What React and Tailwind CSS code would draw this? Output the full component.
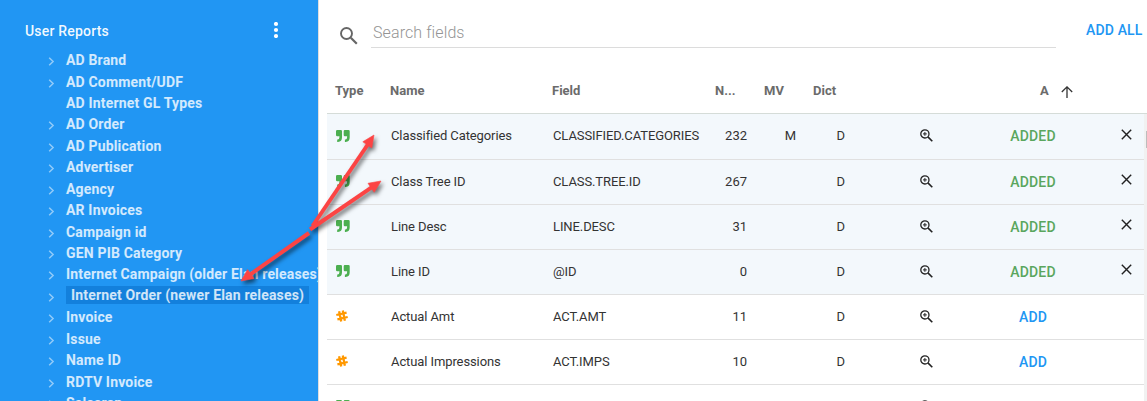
const reports = [
  'AD Brand',
  'AD Comment/UDF',
  'AD Internet GL Types',
  'AD Order',
  'AD Publication',
  'Advertiser',
  'Agency',
  'AR Invoices',
  'Campaign id',
  'GEN PIB Category',
  'Internet Campaign (older Elan releases)',
  'Internet Order (newer Elan releases)',
  'Invoice',
  'Issue',
  'Name ID',
  'RDTV Invoice',
  'Salesrep',
];

const fields = [
  { type: 'text', name: 'Classified Categories', field: 'CLASSIFIED.CATEGORIES', num: '232', mv: 'M', added: true },
  { type: 'text', name: 'Class Tree ID', field: 'CLASS.TREE.ID', num: '267', added: true },
  { type: 'text', name: 'Line Desc', field: 'LINE.DESC', num: '31', added: true },
  { type: 'text', name: 'Line ID', field: '@ID', num: '0', added: true },
  { type: 'number', name: 'Actual Amt', field: 'ACT.AMT', num: '11' },
  { type: 'number', name: 'Actual Impressions', field: 'ACT.IMPS', num: '10' },
];

const columns = 'grid grid-cols-[55px_162px_163px_49px_49px_49px_144px_70px_76px]';

function QuoteIcon() {
  return (
    <svg className="block h-3 w-[14px]" viewBox="0 0 14 12" fill="#4caf50">
      <path d="M1.2 0h3.6Q6 0 6 1.2V7.2Q6 11.6 2 12H1.2V9.6H1.7Q3.4 9.3 3.4 7.2V6.2H1.2Q0 6.2 0 5V1.2Q0 0 1.2 0Z" />
      <path d="M8.9 0h3.6Q13.7 0 13.7 1.2V7.2Q13.7 11.6 9.7 12H8.9V9.6H9.4Q11.1 9.3 11.1 7.2V6.2H8.9Q7.7 6.2 7.7 5V1.2Q7.7 0 8.9 0Z" />
    </svg>
  );
}

function HashIcon() {
  return (
    <svg className="block h-3 w-3" viewBox="0 0 12 12" fill="none" stroke="#ff9800" strokeWidth="2.3">
      <path d="M3.1 1.3 5.2 11.6M6.8.4 8.9 10.7M.3 5 10.6 2.6M1.4 9.4 11.7 7" />
    </svg>
  );
}

function ZoomInIcon() {
  return (
    <svg className="block h-[13px] w-[13px]" viewBox="0 0 13 13" fill="none" stroke="#212121">
      <circle cx="4.9" cy="4.9" r="4.1" strokeWidth="1.3" />
      <path d="M4.9 3v3.8M3 4.9h3.8" strokeWidth="1" />
      <path d="m7.9 7.9 4.4 4.4" strokeWidth="1.6" />
    </svg>
  );
}

function Sidebar() {
  return (
    <aside className="h-full w-[319px] shrink-0 overflow-hidden border-r border-[#dedede] bg-[#2196f3] text-sm font-bold text-white/80">
      <div className="flex h-[49.4px] items-start justify-between pt-[21px] pr-[39px] pl-[25px]">
        <span className="text-sm leading-5 font-medium tracking-[0.2px] text-white/95">User Reports</span>
        <svg className="mt-[1px] h-4 w-[6px]" viewBox="0 0 6 16" fill="#fff">
          <circle cx="3" cy="2" r="2.1" />
          <circle cx="3" cy="8" r="2.1" />
          <circle cx="3" cy="14" r="2.1" />
        </svg>
      </div>
      <ul className="tracking-[0.17px]">
        {reports.map((label, i) => (
          <li key={label} className="flex h-[21.45px] items-center whitespace-nowrap pl-12">
            <span className="flex w-[18px] shrink-0 pt-[3px]">
              {i !== 2 && (
                <svg className="h-[9px] w-[7px]" viewBox="0 0 7 9" fill="none" stroke="#fff" strokeOpacity=".5" strokeWidth="1.5">
                  <path d="m1.2.7 3.9 3.8-3.9 3.8" />
                </svg>
              )}
            </span>
            <span className={i === 11 ? 'mb-px h-[18px] bg-[#1380dc] px-[5px] leading-[18px]' : 'leading-[18px]'}>{label}</span>
          </li>
        ))}
      </ul>
    </aside>
  );
}

function FieldRow({ row, first }) {
  return (
    <div
      className={`${columns} shrink-0 items-center border-b border-[#e0e0e0] text-[13px] leading-5 text-[#333] ${first ? 'h-[46px] pb-[2px]' : 'h-[45px]'} ${row.added ? 'bg-[#f3f8fc]' : 'bg-white'}`}
    >
      <div className={first ? 'pl-[9px]' : 'pb-[2px] pl-[9px]'}>{row.type === 'text' ? <QuoteIcon /> : <HashIcon />}</div>
      <div className="pl-[9px] tracking-[-0.1px]">{row.name}</div>
      <div className="pl-[9px] tracking-[-0.1px]">{row.field}</div>
      <div className="pr-[9px] text-right">{row.num}</div>
      <div className="pr-[9px] text-right">{row.mv}</div>
      <div className="pr-[9px] text-right">D</div>
      <div className={first ? 'flex justify-center' : 'flex justify-center pb-px'}><ZoomInIcon /></div>
      <div className={`text-center text-sm leading-5 font-medium tracking-[0.2px] ${row.added ? 'text-[#5aa65e]' : 'text-[#2196f3]'}`}>
        {row.added ? 'ADDED' : 'ADD'}
      </div>
      <div className={first ? 'flex justify-end pr-3 pb-[3px]' : 'flex justify-end pr-3 pb-[5px]'}>
        {row.added && (
          <svg className="h-[11px] w-[11px]" viewBox="0 0 11 11" stroke="#212121" strokeWidth="1.4">
            <path d="m.8.8 9.4 9.4M10.2.8.8 10.2" />
          </svg>
        )}
      </div>
    </div>
  );
}

function Arrows() {
  return (
    <svg className="pointer-events-none absolute inset-0 h-full w-full" viewBox="0 0 1147 401">
      <g fill="#fc4444" stroke="#fc4444" strokeWidth="4" className="[filter:drop-shadow(2px_3px_2px_rgba(0,0,0,0.55))]">
        <path d="M312.5 226 368.5 143.5" />
        <path d="M374 135 371.8 148 362.8 141.8Z" strokeWidth="0.6" />
        <path d="M310 229.5 372 187.2" />
        <path d="M381 181 374.2 192.3 368 183.3Z" strokeWidth="0.6" />
        <path d="M309 233 250 274.7" />
        <path d="M241 281 254 278.6 247.6 269.6Z" strokeWidth="0.6" />
      </g>
    </svg>
  );
}

export default function App() {
  return (
    <div className="relative flex h-[401px] w-[1147px] overflow-hidden bg-white font-['Roboto',sans-serif]">
      <Sidebar />
      <main className="flex min-w-0 flex-1 flex-col pl-2">
        <div className="flex h-[69px] shrink-0 items-start">
          <svg className="mt-[27px] ml-[13px] h-[18px] w-[18px] shrink-0" viewBox="0 0 18 18" fill="none" stroke="#666">
            <circle cx="6.5" cy="6.5" r="5.5" strokeWidth="1.9" />
            <path d="m10.8 10.8 6 6" strokeWidth="2.2" />
          </svg>
          <div className="ml-[13px] h-12 w-[685px] border-b border-[#dcdcdc] pt-[21px] pl-[2px] text-base leading-6 text-[#949494]">
            <span className="font-light tracking-[0.1px]">Search fields</span>
          </div>
          <div className="mt-[20px] ml-[30px] text-sm leading-5 font-medium tracking-[0.15px] whitespace-nowrap text-[#2196f3]">ADD ALL</div>
        </div>
        <div className={`${columns} h-[45px] shrink-0 items-center border-b border-[#d5dcd8] pb-px text-[13px] leading-5 font-bold text-[#6b6b6b]`}>
          <div className="pl-2">Type</div>
          <div className="pl-2">Name</div>
          <div className="pl-2">Field</div>
          <div className="pl-2">N...</div>
          <div className="pl-2">MV</div>
          <div className="pl-2">Dict</div>
          <div />
          <div className="flex items-center gap-[12px] pl-[42px]">
            <span>A</span>
            <svg className="mt-[3px] h-3 w-3 shrink-0" viewBox="0 0 12 12" fill="none" stroke="#333" strokeWidth="1.3">
              <path d="M6 12V1M.8 6 6 .9 11.2 6" />
            </svg>
          </div>
          <div />
        </div>
        <div className="flex min-h-0 flex-1">
          <div className="flex w-[817px] shrink-0 flex-col overflow-hidden">
            {fields.map((row, i) => (
              <FieldRow key={row.name} row={row} first={i === 0} />
            ))}
            <div className={`${columns} shrink-0 pt-[15px]`}>
              <div className="pl-[9px]"><QuoteIcon /></div>
              <div className="col-start-7 flex justify-center"><ZoomInIcon /></div>
            </div>
          </div>
          <div className="flex-1 bg-[#f1f1f1] pt-[17px] pl-[2px]">
            <div className="h-[17px] bg-[#bdbdbd]" />
          </div>
        </div>
      </main>
      <Arrows />
    </div>
  );
}
